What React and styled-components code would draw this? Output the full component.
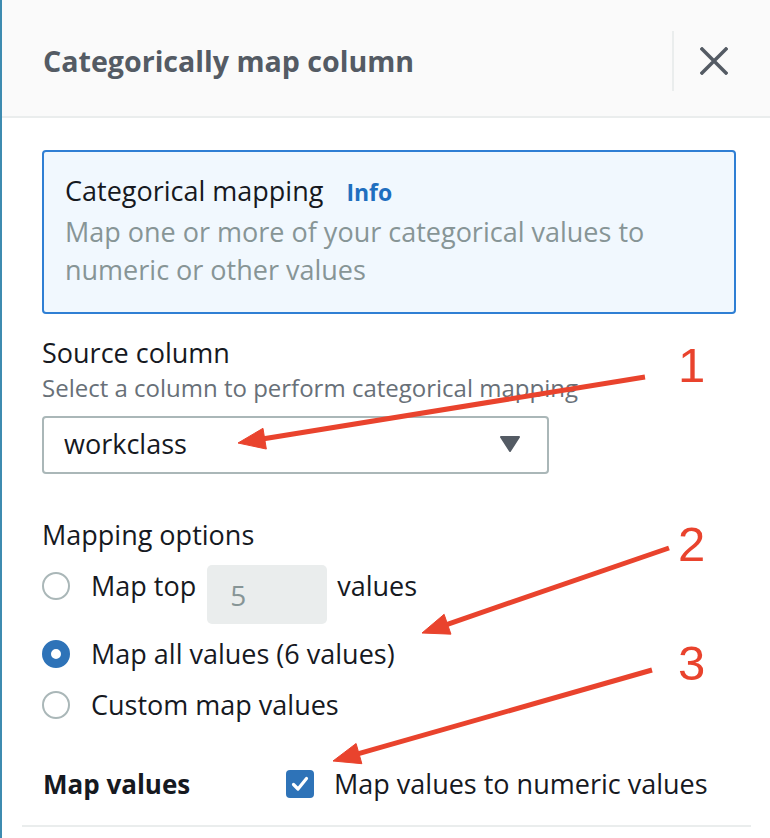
import React from "react";
import styled, { createGlobalStyle } from "styled-components";

const Global = createGlobalStyle`
  html, body { margin: 0; padding: 0; background: #ffffff; }
  body { font-family: "Open Sans", "Noto Sans", sans-serif; color: #16191f; }
  * { box-sizing: border-box; }
`;

const Page = styled.div`
  position: relative;
  width: 770px;
  height: 838px;
  overflow: hidden;
  background: #ffffff;
`;

const Panel = styled.div`
  height: 100%;
  border-left: 2px solid #3d8bb0;
  background: #ffffff;
`;

const Header = styled.header`
  display: flex;
  align-items: center;
  height: 118px;
  padding: 6px 0 0 41px;
  background: #fafafa;
  border-bottom: 2px solid #eaeded;
`;

const Title = styled.h2`
  flex: 1;
  margin: 0;
  font-size: 28.6px;
  line-height: 36px;
  font-weight: 700;
  color: #545b64;
`;

const HeaderDivider = styled.div`
  width: 2px;
  height: 60px;
  background: #eaeded;
`;

const CloseButton = styled.button`
  display: flex;
  align-items: center;
  justify-content: center;
  width: 80px;
  height: 60px;
  margin-right: 16px;
  padding: 0;
  border: none;
  background: transparent;
  color: #545b64;
  cursor: pointer;
`;

const Body = styled.div`
  padding: 32px 34px 0 40px;
`;

const InfoBox = styled.section`
  border: 2px solid #2f7fd4;
  border-radius: 4px;
  background: #f1f8fe;
  padding: 20px 20px 23px 21px;
`;

const InfoTitle = styled.div`
  font-size: 27px;
  line-height: 38px;
  color: #16191f;
`;

const InfoLink = styled.a`
  margin-left: 23px;
  font-size: 23px;
  font-weight: 700;
  color: #1f6fbf;
  text-decoration: none;
`;

const InfoText = styled.p`
  margin: 2px 0 0;
  font-size: 27px;
  line-height: 38px;
  color: #879596;
`;

const FieldLabel = styled.div`
  margin-top: ${(p) => p.$top}px;
  font-size: 27px;
  line-height: 38px;
  color: #16191f;
`;

const Hint = styled.div`
  font-size: 24px;
  line-height: 32px;
  color: #687078;
`;

const Select = styled.div`
  display: flex;
  align-items: center;
  justify-content: space-between;
  width: 507px;
  height: 58px;
  margin-top: 12px;
  padding: 0 26px 2px 20px;
  border: 2px solid #aab7b8;
  border-radius: 4px;
  font-size: 27px;
  line-height: 38px;
  color: #16191f;
`;

const RadioRow = styled.div`
  display: flex;
  align-items: flex-start;
  margin-top: ${(p) => p.$top}px;
`;

const RadioLine = styled.label`
  display: flex;
  align-items: center;
  gap: 21px;
  height: 38px;
  margin-top: ${(p) => p.$shift || 0}px;
  font-size: 27px;
  line-height: 38px;
  color: #16191f;
`;

const Radio = styled.span`
  flex: none;
  width: 28px;
  height: 28px;
  border-radius: 50%;
  background: #ffffff;
  border: ${(p) => (p.$checked ? "9px solid #2e73b8" : "2px solid #aab7b8")};
`;

const NumberBox = styled.div`
  width: 120px;
  height: 59px;
  margin: 0 10px 0 11px;
  padding: 10px 0 0 23px;
  border-radius: 5px;
  background: #eaeded;
  font-size: 28px;
  line-height: 40px;
  color: #879596;
`;

const Text = styled.span`
  display: block;
  font-size: 27px;
  line-height: 38px;
  margin-top: ${(p) => p.$shift || 0}px;
  color: #16191f;
`;

const ValuesRow = styled.div`
  display: grid;
  grid-template-columns: 224px 28px auto;
  align-items: center;
  column-gap: 20px;
  margin-top: 41.5px;
  height: 38px;
`;

const ValuesLabel = styled.div`
  margin-left: 1px;
  font-size: 26px;
  line-height: 38px;
  font-weight: 700;
  color: #16191f;
`;

const Checkbox = styled.span`
  display: flex;
  align-items: center;
  justify-content: center;
  width: 28px;
  height: 28px;
  border-radius: 4px;
  background: #2e73b8;
`;

const Rule = styled.div`
  height: 2px;
  margin: 22px 19px 0 20px;
  background: #eaeded;
`;

const Overlay = styled.svg`
  position: absolute;
  top: 0;
  left: 0;
  pointer-events: none;
`;

const RED = "#e9432d";

function Arrow({ from, to, len = 27, half = 10.5 }) {
  const dx = to[0] - from[0];
  const dy = to[1] - from[1];
  const L = Math.hypot(dx, dy);
  const ux = dx / L;
  const uy = dy / L;
  const bx = to[0] - ux * len;
  const by = to[1] - uy * len;
  const px = -uy * half;
  const py = ux * half;
  const pts = `${to[0]},${to[1]} ${bx + px},${by + py} ${bx - px},${by - py}`;
  return (
    <g>
      <line x1={from[0]} y1={from[1]} x2={bx + ux * 4} y2={by + uy * 4} stroke={RED} strokeWidth="5" />
      <polygon points={pts} fill={RED} stroke={RED} strokeWidth="1" strokeLinejoin="round" />
    </g>
  );
}

export default function App() {
  return (
    <Page>
      <Global />
      <Panel>
        <Header>
          <Title>Categorically map column</Title>
          <HeaderDivider />
          <CloseButton aria-label="Close">
            <svg width="28" height="28" viewBox="0 0 28 28">
              <path d="M2 2 L26 26 M26 2 L2 26" stroke="#545b64" strokeWidth="3.5" strokeLinecap="square" fill="none" />
            </svg>
          </CloseButton>
        </Header>
        <Body>
          <InfoBox>
            <InfoTitle>
              Categorical mapping<InfoLink href="#">Info</InfoLink>
            </InfoTitle>
            <InfoText>
              Map one or more of your categorical values to
              <br />
              numeric or other values
            </InfoText>
          </InfoBox>

          <FieldLabel $top={20}>Source column</FieldLabel>
          <Hint>Select a column to perform categorical mapping</Hint>
          <Select>
            <span>workclass</span>
            <svg width="22" height="18" viewBox="0 0 22 18">
              <path d="M2 2 L20 2 L11 16 Z" fill="#545b64" stroke="#545b64" strokeWidth="2" strokeLinejoin="round" />
            </svg>
          </Select>

          <FieldLabel $top={42}>Mapping options</FieldLabel>
          <RadioRow $top={11}>
            <RadioLine $shift={1.5}>
              <Radio />
              Map top
            </RadioLine>
            <NumberBox>5</NumberBox>
            <Text $shift={1.5}>values</Text>
          </RadioRow>
          <RadioRow $top={10.5}>
            <RadioLine>
              <Radio $checked />
              Map all values (6 values)
            </RadioLine>
          </RadioRow>
          <RadioRow $top={13}>
            <RadioLine>
              <Radio />
              Custom map values
            </RadioLine>
          </RadioRow>

          <ValuesRow>
            <ValuesLabel>Map values</ValuesLabel>
            <Checkbox>
              <svg width="20" height="20" viewBox="0 0 20 20">
                <path d="M3.5 10.5 L8 15 L16.5 4.5" stroke="#ffffff" strokeWidth="3.2" fill="none" strokeLinecap="round" strokeLinejoin="round" />
              </svg>
            </Checkbox>
            <Text>Map values to numeric values</Text>
          </ValuesRow>
        </Body>
        <Rule />
      </Panel>

      <Overlay width="770" height="838" viewBox="0 0 770 838">
        <Arrow from={[645, 377]} to={[238, 443]} />
        <Arrow from={[669, 548]} to={[422, 633]} />
        <Arrow from={[652, 670]} to={[333, 761]} />
        <g fill={RED} fontFamily="'Liberation Sans', Arial, sans-serif" fontSize="49">
          <text x="678" y="382">1</text>
          <text x="678" y="561">2</text>
          <text x="678" y="680">3</text>
        </g>
      </Overlay>
    </Page>
  );
}
